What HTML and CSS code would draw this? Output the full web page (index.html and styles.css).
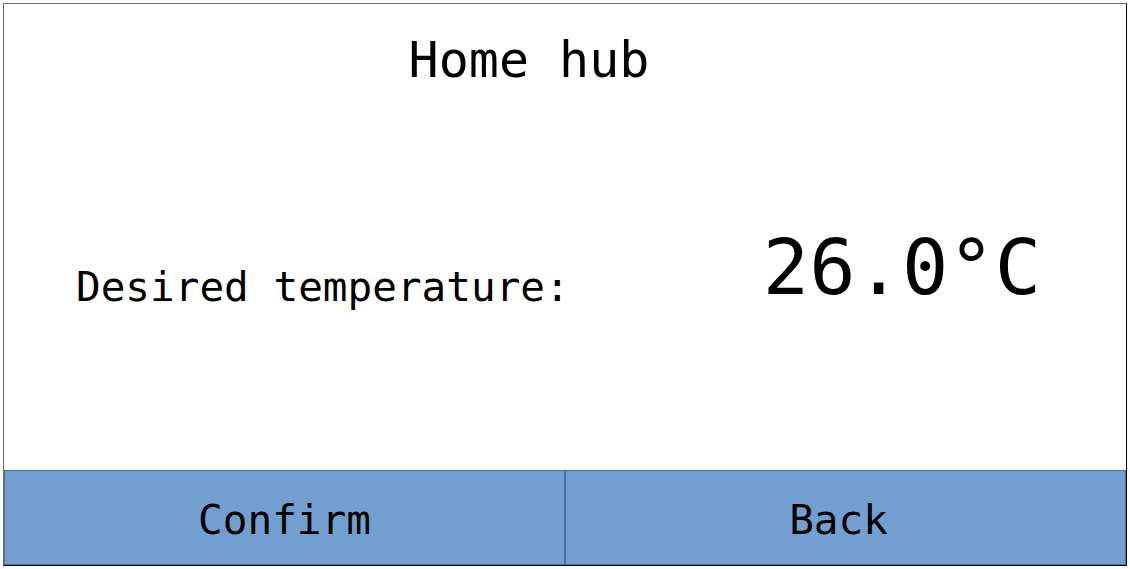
FILE: index.html
```html
<!DOCTYPE html>
<html lang="en">
<head>
<meta charset="utf-8">
<title>Home hub</title>
<link rel="stylesheet" href="styles.css">
</head>
<body>
<div class="screen">
  <header class="title">Home hub</header>
  <main class="content">
    <div class="label">Desired temperature:</div>
    <div class="value">26.0°C</div>
  </main>
  <footer class="actions">
    <button class="btn">Confirm</button>
    <button class="btn btn-back">Back</button>
  </footer>
</div>
</body>
</html>
```

FILE: styles.css
```css
html, body {
  margin: 0;
  padding: 0;
  background: #ffffff;
}

body {
  font-family: "DejaVu Sans Mono", "Liberation Mono", monospace;
  color: #000;
}

.screen {
  margin: 3px 0 0 3px;
  width: 1124px;
  height: 563px;
  box-sizing: border-box;
  border-top: 1px solid #6a6a6a;
  border-left: 1px solid #6a6a6a;
  border-right: 1px solid #000;
  border-bottom: 1px solid #000;
  display: flex;
  flex-direction: column;
}

.title {
  font-size: 50px;
  line-height: 50px;
  padding-top: 31px;
  padding-right: 72px;
  text-align: center;
}

.content {
  flex: 1;
  display: flex;
  justify-content: space-between;
  align-items: flex-start;
  padding: 0 85px 0 72px;
}

.label {
  font-size: 41px;
  line-height: 41px;
  margin-top: 182px;
}

.value {
  font-size: 77px;
  line-height: 77px;
  margin-top: 144px;
}

.actions {
  height: 95px;
  display: grid;
  grid-template-columns: 1fr 1fr;
}

.btn {
  font-family: inherit;
  font-size: 41px;
  line-height: 41px;
  color: #000;
  background: #729fcf;
  border: 1px solid #4470aa;
  margin: 0;
  padding: 5px 0 0 0;
  cursor: pointer;
}

.btn-back {
  border-left: 2px solid #4470aa;
  margin-left: -1px;
  padding-right: 14px;
}
```
